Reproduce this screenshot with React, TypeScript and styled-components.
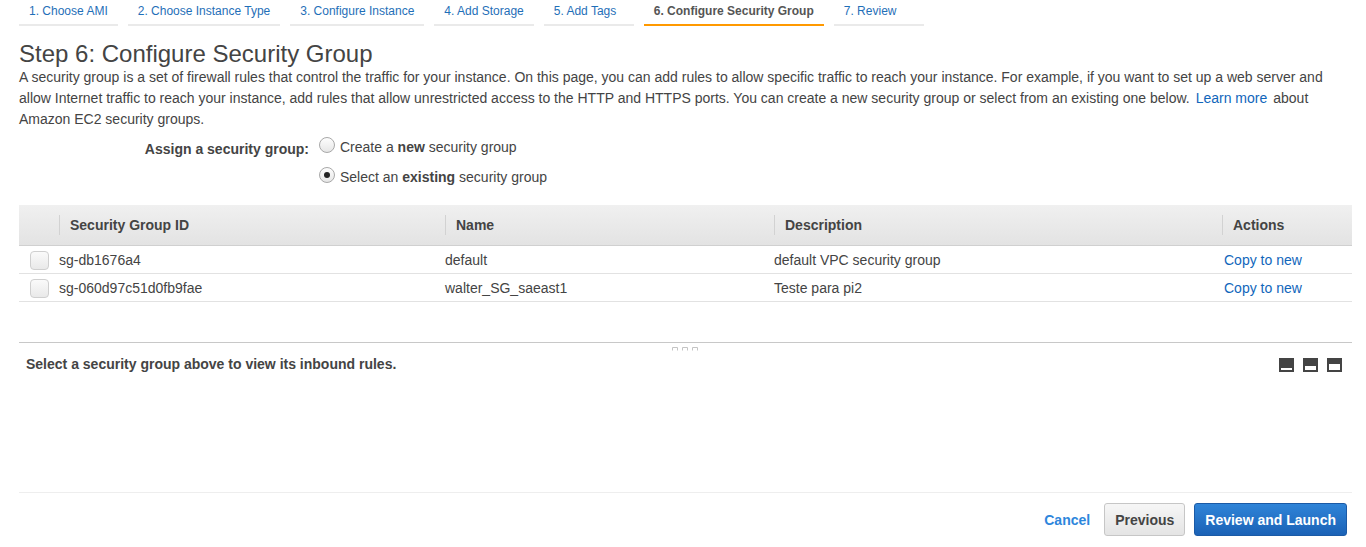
import React from "react";
import styled, { createGlobalStyle } from "styled-components";

const Global = createGlobalStyle`
  html, body { margin: 0; padding: 0; background: #fff; }
  body { font-family: "Liberation Sans", Arial, sans-serif; font-size: 14px; color: #444; }
  * { box-sizing: border-box; }
`;

const Page = styled.div`
  padding: 0 14px 0 19px;
  width: 1366px;
`;

const Tabs = styled.nav`
  display: flex;
  gap: 10px;
`;

const Tab = styled.div<{ $active?: boolean }>`
  min-width: 90px;
  padding: 4px 10px 6px;
  line-height: 14px;
  font-size: 12px;
  color: ${(p) => (p.$active ? "#555" : "#1f6fb8")};
  font-weight: ${(p) => (p.$active ? "bold" : "normal")};
  border-bottom: 2px solid ${(p) => (p.$active ? "#f90" : "#eaeaea")};
  white-space: nowrap;
`;

const Title = styled.h1`
  margin: 15px 0 0;
  font-size: 24px;
  line-height: 26px;
  font-weight: normal;
  color: #444;
`;

const Intro = styled.p`
  margin: 0;
  line-height: 21px;
  font-size: 14px;
`;

const Link = styled.a`
  color: #1166bb;
  text-decoration: none;
  padding: 0 6px;
`;

const AssignGrid = styled.div`
  display: grid;
  grid-template-columns: 290px 1fr;
  column-gap: 10px;
  margin-top: 4px;
`;

const AssignLabel = styled.div`
  font-weight: bold;
  text-align: right;
  line-height: 30px;
  height: 30px;
`;

const RadioRow = styled.label`
  grid-column: 2;
  display: flex;
  align-items: center;
  gap: 5px;
  height: 30px;
  margin-top: -2px;
`;

const Radio = styled.span<{ $checked?: boolean }>`
  width: 16px;
  height: 16px;
  border-radius: 50%;
  border: 1px solid #a8a8a8;
  background: linear-gradient(#fdfdfd, #e6e6e6);
  display: inline-flex;
  align-items: center;
  justify-content: center;
  position: relative;
  top: -2px;
  &::after {
    content: "";
    display: ${(p) => (p.$checked ? "block" : "none")};
    width: 6px;
    height: 6px;
    border-radius: 50%;
    background: #222;
  }
`;

const Table = styled.div`
  margin-top: 13px;
`;

const cols = "40px 386px 329px 448px 1fr";

const HeadRow = styled.div`
  display: grid;
  grid-template-columns: ${cols};
  height: 41px;
  align-items: center;
  background: linear-gradient(#f0f0f0, #e3e3e3);
  border-bottom: 1px solid #d0d0d0;
`;

const HeadCell = styled.div<{ $first?: boolean }>`
  font-weight: bold;
  color: #444;
  padding-left: 10px;
  padding-top: 1px;
  border-left: ${(p) => (p.$first ? "none" : "1px solid #d2d2d2")};
  line-height: 19px;
`;

const Row = styled.div`
  display: grid;
  grid-template-columns: ${cols};
  height: 28px;
  align-items: center;
  border-bottom: 1px solid #e2e2e2;
  padding-top: 1px;
`;

const Cell = styled.div<{ $pad?: number }>`
  padding-left: ${(p) => p.$pad ?? 0}px;
  white-space: nowrap;
`;

const Check = styled.span`
  display: block;
  margin-left: 11px;
  width: 19px;
  height: 19px;
  border-radius: 4px;
  border: 1px solid #cfcfcf;
  background: linear-gradient(#fafafa, #e9e9e9);
`;

const ActionLink = styled.a`
  color: #1166bb;
  text-decoration: none;
`;

const Pane = styled.section`
  margin-top: 40px;
  height: 151px;
  border-top: 1px solid #c8c8c8;
  border-bottom: 1px solid #eee;
  position: relative;
`;

const Handle = styled.svg`
  position: absolute;
  left: 653px;
  top: 3px;
`;

const PaneHead = styled.div`
  display: flex;
  align-items: center;
  justify-content: space-between;
  padding: 12px 10px 0 7px;
`;

const PaneText = styled.div`
  font-weight: bold;
  line-height: 18px;
`;

const Icons = styled.div`
  display: flex;
  gap: 9px;
  padding-top: 2px;
`;

const Footer = styled.footer`
  display: flex;
  justify-content: flex-end;
  align-items: center;
  padding: 10px 5px 0 0;
`;

const Cancel = styled.a`
  color: #2d86dc;
  font-weight: bold;
  text-decoration: none;
  margin-right: 5px;
`;

const Button = styled.button<{ $primary?: boolean }>`
  font-family: inherit;
  font-size: 14px;
  font-weight: bold;
  height: 33px;
  padding: 0 10px;
  border-radius: 3px;
  margin-left: 9px;
  border: 1px solid ${(p) => (p.$primary ? "#1b5aa6" : "#c6c6c6")};
  background: ${(p) =>
    p.$primary ? "linear-gradient(#2f84d8, #1b62b6)" : "linear-gradient(#f6f6f6, #e4e4e4)"};
  color: ${(p) => (p.$primary ? "#fff" : "#444")};
`;

const PaneIcon = ({ top, h }: { top: number; h: number }) => (
  <svg width="15" height="14" viewBox="0 0 15 14">
    <rect width="15" height="14" fill="#444" />
    <rect x="2" y={top} width="11" height={h} fill="#fff" />
  </svg>
);

const tabs = [
  "1. Choose AMI",
  "2. Choose Instance Type",
  "3. Configure Instance",
  "4. Add Storage",
  "5. Add Tags",
  "6. Configure Security Group",
  "7. Review",
];

const rows = [
  ["sg-db1676a4", "default", "default VPC security group"],
  ["sg-060d97c51d0fb9fae", "walter_SG_saeast1", "Teste para pi2"],
];

export default function App() {
  return (
    <>
      <Global />
      <Page>
        <Tabs>
          {tabs.map((t, i) => (
            <Tab key={t} $active={i === 5}>
              {t}
            </Tab>
          ))}
        </Tabs>
        <Title>Step 6: Configure Security Group</Title>
        <Intro>
          A security group is a set of firewall rules that control the traffic for your instance. On this page, you can
          add rules to allow specific traffic to reach your instance. For example, if you want to set up a web server and
          allow Internet traffic to reach your instance, add rules that allow unrestricted access to the HTTP and HTTPS
          ports. You can create a new security group or select from an existing one below.
          <Link href="#">Learn more</Link>about Amazon EC2 security groups.
        </Intro>
        <AssignGrid>
          <AssignLabel>Assign a security group:</AssignLabel>
          <RadioRow style={{ gridRow: 1 }}>
            <Radio />
            <span>
              Create a <b>new</b> security group
            </span>
          </RadioRow>
          <RadioRow>
            <Radio $checked />
            <span>
              Select an <b>existing</b> security group
            </span>
          </RadioRow>
        </AssignGrid>
        <Table>
          <HeadRow>
            <HeadCell $first />
            <HeadCell>Security Group ID</HeadCell>
            <HeadCell>Name</HeadCell>
            <HeadCell>Description</HeadCell>
            <HeadCell>Actions</HeadCell>
          </HeadRow>
          {rows.map((r) => (
            <Row key={r[0]}>
              <Cell>
                <Check />
              </Cell>
              <Cell>{r[0]}</Cell>
              <Cell>{r[1]}</Cell>
              <Cell>{r[2]}</Cell>
              <Cell $pad={2}>
                <ActionLink href="#">Copy to new</ActionLink>
              </Cell>
            </Row>
          ))}
        </Table>
        <Pane>
          <Handle width="27" height="5" viewBox="0 0 27 5">
            {[0, 10, 20].map((x) => (
              <path key={x} d={`M${x + 0.5} 4.5 V1.5 H${x + 5.5} V4.5`} fill="none" stroke="#c4c4c4" strokeWidth="1" />
            ))}
          </Handle>
          <PaneHead>
            <PaneText>Select a security group above to view its inbound rules.</PaneText>
            <Icons>
              <PaneIcon top={10} h={2} />
              <PaneIcon top={8} h={4} />
              <PaneIcon top={6} h={6} />
            </Icons>
          </PaneHead>
        </Pane>
        <Footer>
          <Cancel href="#">Cancel</Cancel>
          <Button>Previous</Button>
          <Button $primary>Review and Launch</Button>
        </Footer>
      </Page>
    </>
  );
}
